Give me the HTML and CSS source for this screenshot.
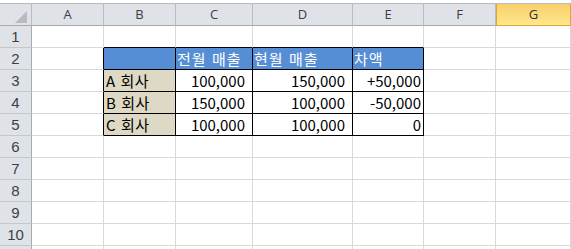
FILE: index.html
```html
<!DOCTYPE html>
<html>

<head>
    <link rel="stylesheet" href="styles.css">
</head>

<body>
    <div class="sheet">
        <!-- header row -->
        <div class="hd corner"><span class="tri"></span></div>
        <div class="hd col">A</div>
        <div class="hd col">B</div>
        <div class="hd col">C</div>
        <div class="hd col">D</div>
        <div class="hd col">E</div>
        <div class="hd col">F</div>
        <div class="hd col sel">G</div>

        <!-- 1 -->
        <div class="hd num">1</div>
        <div class="cell"></div>
        <div class="cell bb"></div>
        <div class="cell bb"></div>
        <div class="cell bb"></div>
        <div class="cell bb"></div>
        <div class="cell"></div>
        <div class="cell"></div>

        <!-- 2 -->
        <div class="hd num">2</div>
        <div class="cell rb"></div>
        <div class="cell tb blue"></div>
        <div class="cell tb blue">전월 매출</div>
        <div class="cell tb blue">현월 매출</div>
        <div class="cell tb blue">차액</div>
        <div class="cell"></div>
        <div class="cell"></div>

        <!-- 3 -->
        <div class="hd num">3</div>
        <div class="cell rb"></div>
        <div class="cell tb tan">A 회사</div>
        <div class="cell tb amt">100,000</div>
        <div class="cell tb amt">150,000</div>
        <div class="cell tb diff">+50,000</div>
        <div class="cell"></div>
        <div class="cell"></div>

        <!-- 4 -->
        <div class="hd num">4</div>
        <div class="cell rb"></div>
        <div class="cell tb tan">B 회사</div>
        <div class="cell tb amt">150,000</div>
        <div class="cell tb amt">100,000</div>
        <div class="cell tb diff">-50,000</div>
        <div class="cell"></div>
        <div class="cell"></div>

        <!-- 5 -->
        <div class="hd num">5</div>
        <div class="cell rb"></div>
        <div class="cell tb tan">C 회사</div>
        <div class="cell tb amt">100,000</div>
        <div class="cell tb amt">100,000</div>
        <div class="cell tb diff">0</div>
        <div class="cell"></div>
        <div class="cell"></div>

        <!-- 6 -->
        <div class="hd num">6</div>
        <div class="cell"></div>
        <div class="cell"></div>
        <div class="cell"></div>
        <div class="cell"></div>
        <div class="cell"></div>
        <div class="cell"></div>
        <div class="cell"></div>

        <!-- 7 -->
        <div class="hd num">7</div>
        <div class="cell"></div>
        <div class="cell"></div>
        <div class="cell"></div>
        <div class="cell"></div>
        <div class="cell"></div>
        <div class="cell"></div>
        <div class="cell"></div>

        <!-- 8 -->
        <div class="hd num">8</div>
        <div class="cell"></div>
        <div class="cell"></div>
        <div class="cell"></div>
        <div class="cell"></div>
        <div class="cell"></div>
        <div class="cell"></div>
        <div class="cell"></div>

        <!-- 9 -->
        <div class="hd num">9</div>
        <div class="cell"></div>
        <div class="cell"></div>
        <div class="cell"></div>
        <div class="cell"></div>
        <div class="cell"></div>
        <div class="cell"></div>
        <div class="cell"></div>

        <!-- 10 -->
        <div class="hd num">10</div>
        <div class="cell"></div>
        <div class="cell"></div>
        <div class="cell"></div>
        <div class="cell"></div>
        <div class="cell"></div>
        <div class="cell"></div>
        <div class="cell"></div>

        <!-- 11, only its top edge shows -->
        <div class="hd num last"></div>
        <div class="cell last"></div>
        <div class="cell last"></div>
        <div class="cell last"></div>
        <div class="cell last"></div>
        <div class="cell last"></div>
        <div class="cell last"></div>
        <div class="cell last"></div>
    </div>
</body>

</html>
```

FILE: styles.css
```css
html,
body {
    margin: 0;
    background-color: white;
    overflow: hidden;
}

.sheet {
    margin-top: 3px;
    border-top: 1px solid #b9bcc0;
    display: grid;
    grid-template-columns: 32px 72px 72px 77px 100px 71px 72px 1fr;
    grid-template-rows: repeat(11, 22px) 3px;
    font-family: "Noto Sans CJK KR", sans-serif;
    font-size: 15px;
    color: black;
}

.hd {
    background-color: #dfe3e8;
    border-right: 1px solid #b9bdc3;
    border-bottom: 1px solid #b9bdc3;
    box-sizing: border-box;
    color: #3a3f47;
}

.corner {
    position: relative;
    border-bottom-color: #a7abb0;
}

.tri {
    position: absolute;
    right: 4px;
    bottom: 2px;
    width: 12px;
    height: 12px;
    background-color: #b8bcc1;
    clip-path: polygon(100% 0, 100% 100%, 0 100%);
}

.col {
    font-family: "Open Sans", sans-serif;
    font-size: 13px;
    text-align: center;
    line-height: 21px;
    border-bottom-color: #a7abb0;
}

.sel {
    background: linear-gradient(#f8cf6c, #fee88c);
    border: 1px solid #e0a431;
    border-top: none;
    color: #333;
}

.num {
    font-family: "Liberation Sans", sans-serif;
    font-size: 15px;
    text-align: center;
    line-height: 21px;
    border-bottom-color: #c3c7cc;
    border-right-color: #a7abb0;
}

.cell {
    border-right: 1px solid #d9d9d9;
    border-bottom: 1px solid #d9d9d9;
    box-sizing: border-box;
    line-height: 21px;
    white-space: nowrap;
    overflow: hidden;
}

.last {
    border-bottom: none;
}

.bb {
    border-bottom-color: black;
}

.rb {
    border-right-color: black;
}

.tb {
    border-right-color: black;
    border-bottom-color: black;
}

.blue {
    background-color: #558ed5;
    color: white;
    padding-left: 1px;
    letter-spacing: 1px;
    word-spacing: 1px;
}

.tan {
    background-color: #ddd9c4;
    padding-left: 2px;
    letter-spacing: 0.5px;
    word-spacing: 1px;
}

.amt {
    text-align: right;
    padding-right: 7px;
}

.diff {
    text-align: right;
    padding-right: 2px;
}
```
